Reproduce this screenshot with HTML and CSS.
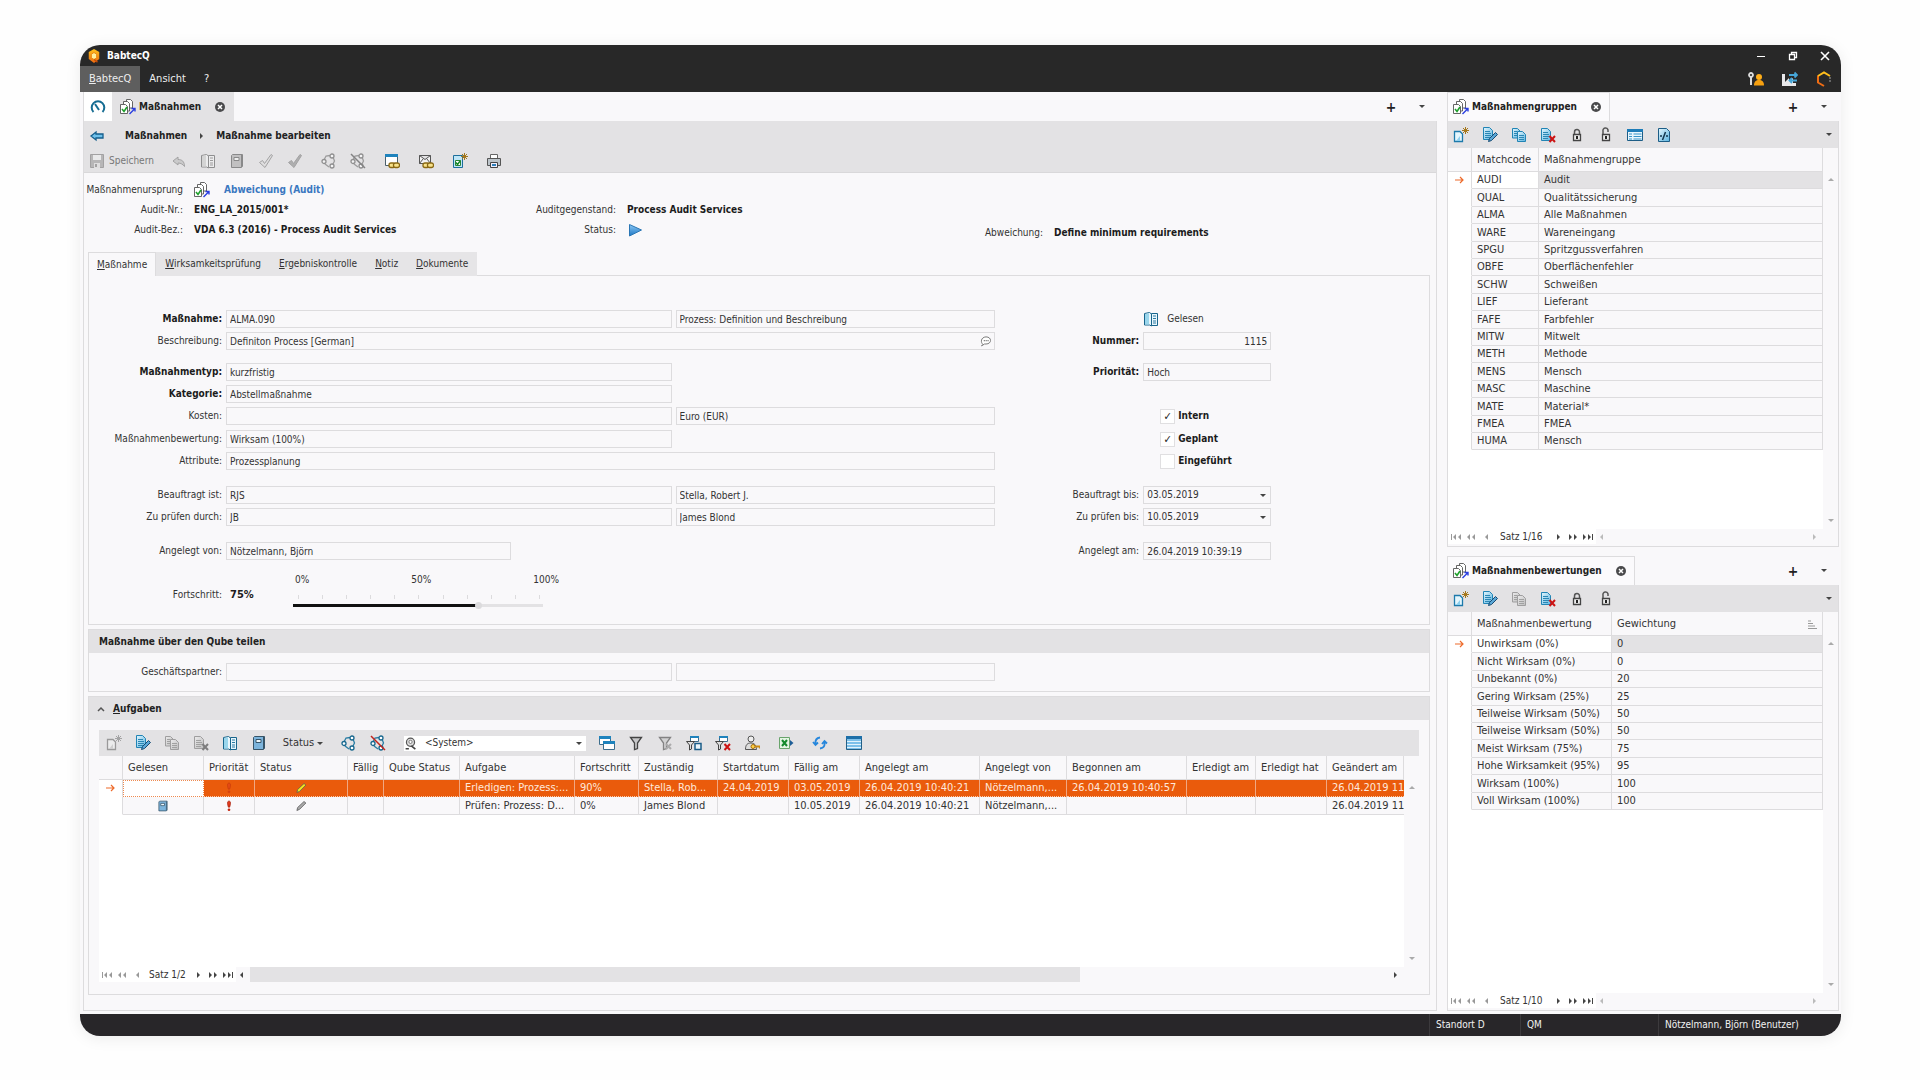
FILE: index.html
```html
<!DOCTYPE html>
<html lang="de">
<head>
    <meta charset="UTF-8">
    <meta name="viewport" content="width=device-width, initial-scale=1.0">
    <title>BabtecQ</title>
    <link rel="stylesheet" href="styles.css">
</head>
<body>

<!-- Icons -->
<svg class="sprite" aria-hidden="true">
    <defs>
        <linearGradient id="blue" x1="0" y1="0" x2="1" y2="1">
            <stop offset="0" stop-color="#e4f6fd"/>
            <stop offset="1" stop-color="#5bb4e0"/>
        </linearGradient>
        <linearGradient id="play" x1="0" y1="0" x2="0" y2="1">
            <stop offset="0" stop-color="#8cc8f4"/>
            <stop offset="1" stop-color="#1c76c4"/>
        </linearGradient>
        <linearGradient id="gold" x1="0" y1="0" x2="0" y2="1">
            <stop offset="0" stop-color="#ffc21c"/>
            <stop offset="1" stop-color="#ee6a10"/>
        </linearGradient>
    </defs>
    <symbol id="logo" viewBox="0 0 16 16">
        <path d="M8 0l6 3.500v8L8 16l-6-4.500v-8z" fill="url(#gold)"/>
        <path d="M8 4l3 2v4l-3 2-3-2V6z" fill="#fff0a0" stroke="#e8820c"/>
        <path d="M8 12l4 3" stroke="#c44a08" stroke-width="1.500"/>
    </symbol>
    <symbol id="measure" viewBox="0 0 16 16">
        <path d="M6.500 3V.5h4l2 2V9H9" fill="#fff" stroke="#555" stroke-width=".9"/>
        <path d="M3.500 5V2.500h4l2 2V12H8" fill="#fff" stroke="#555" stroke-width=".9"/>
        <path d="M.5 5.500h5l2 2v7h-7z" fill="#fff" stroke="#555" stroke-width=".9"/>
        <path d="M2 10l2 2.500L7 8" fill="none" stroke="#1fa02c" stroke-width="1.600"/>
        <path d="M9.500 15l5-5M11.500 9.500h3.500v3" fill="none" stroke="#2a3ee0" stroke-width="1.400"/>
    </symbol>
    <symbol id="gauge" viewBox="0 0 16 16">
        <path d="M3.500 13a6.300 6.300 0 1 1 9 0" fill="none" stroke="#156c92" stroke-width="2"/>
        <path d="M5 5l4 6" stroke="#156c92" stroke-width="2"/>
    </symbol>
    <symbol id="close" viewBox="0 0 12 12">
        <circle cx="6" cy="6" r="5" fill="#4a4a4c"/>
        <path d="M4 4l4 4M8 4L4 8" stroke="#fff" stroke-width="1.500"/>
    </symbol>
    <symbol id="back" viewBox="0 0 16 16">
        <path d="M2 8l5-4v2h7v4H7v2z" fill="#6fc0ea" stroke="#155e8c" stroke-width="1.300"/>
    </symbol>
    <symbol id="save" viewBox="0 0 16 16">
        <path d="M1.500 1.500h13v13h-13z" fill="#9a9a9c" stroke="#777"/>
        <path d="M4 2h8v5H4z" fill="#eee"/>
        <path d="M5 10h6v5H5z" fill="#ddd"/>
        <path d="M6 11h2v3H6z" fill="#777"/>
    </symbol>
    <symbol id="undo" viewBox="0 0 16 16">
        <path d="M2 8l5-4v2.500c4 0 6.500 2 6.500 7C12 11.500 10 10 7 10v2z" fill="#bbb" stroke="#777"/>
    </symbol>
    <symbol id="book" viewBox="0 0 16 16">
        <path d="M1.500 2.500l5-1 2 1.500v12l-2-1h-5z" fill="#e8f6fc" stroke="#18658c"/>
        <path d="M8.500 2.500h6v12h-6z" fill="#e8f6fc" stroke="#18658c"/>
        <path d="M10 5h3M10 7.500h3M10 10h3M10 12h3" stroke="#2c7ba3"/>
        <path d="M2 3l4-.5v11H2z" fill="#9ad6ec"/>
    </symbol>
    <symbol id="notebook" viewBox="0 0 16 16">
        <path d="M2.500 2.500l1-1h10v12l-1 1h-10z" fill="#7cb4dc" stroke="#375468"/>
        <path d="M12.500 2v12" stroke="#375468"/>
        <path d="M5 4.500h5v3H5z" fill="#eef8fd" stroke="#375468"/>
    </symbol>
    <symbol id="tick" viewBox="0 0 16 16">
        <path d="M1.500 9.500l3-2 2 3 6.500-9 1.500 1-7.500 12z" fill="#ddd" stroke="#777"/>
    </symbol>
    <symbol id="tick-solid" viewBox="0 0 16 16">
        <path d="M1.500 9.500l3-2 2 3 6.500-9 1.500 1-7.500 12z" fill="#8c8c8e" stroke="#777"/>
    </symbol>
    <symbol id="share" viewBox="0 0 16 16">
        <path d="M3 7l2-4 4-.5M12 4l1.500 4-2 4M8 14l-4-3" fill="none" stroke="#2a7ea4" stroke-width="1.300"/>
        <circle cx="11" cy="3" r="2" fill="#fff" stroke="#17678e" stroke-width="1.300"/>
        <circle cx="3" cy="8.500" r="2" fill="#fff" stroke="#17678e" stroke-width="1.300"/>
        <circle cx="11" cy="13" r="2" fill="#fff" stroke="#17678e" stroke-width="1.300"/>
    </symbol>
    <symbol id="unshare" viewBox="0 0 16 16">
        <use href="#share"/>
        <path d="M1 1l14 14" stroke="#c3241c" stroke-width="1.500"/>
    </symbol>
    <symbol id="chain" viewBox="0 0 16 16">
        <rect x="5" y="10" width="6" height="4.500" rx="2" fill="#f8e28a" stroke="#8a6914" stroke-width="1.300"/>
        <rect x="9.500" y="10" width="6" height="4.500" rx="2" fill="#f8e28a" stroke="#8a6914" stroke-width="1.300"/>
    </symbol>
    <symbol id="window-chain" viewBox="0 0 16 16">
        <path d="M1.500 1.500h12v11h-12z" fill="#fff" stroke="#4b5f6c"/>
        <path d="M1 1h13v3H1z" fill="#1f83bd"/>
        <use href="#chain"/>
    </symbol>
    <symbol id="mail-chain" viewBox="0 0 16 16">
        <path d="M1.500 2.500h11v8h-11zM1.500 2.500l5.500 4 5.500-4M1.500 10.500L5 6M12.500 10.500L9 6" fill="#f2f2f2" stroke="#555"/>
        <use href="#chain"/>
    </symbol>
    <symbol id="star" viewBox="0 0 16 16">
        <path d="M12.500 0v7M9 3.500h7M10 1l5 5M15 1l-5 5" stroke="#a5771b"/>
    </symbol>
    <symbol id="report-new" viewBox="0 0 16 16">
        <path d="M1.500 2.500h9v12h-9z" fill="#bfe6f7" stroke="#1d6f9c"/>
        <path d="M3.500 7.500h5v5h-5z" fill="#fff" stroke="#2a8436"/>
        <path d="M4 9.500l1.500 2 3-4" fill="none" stroke="#15892a" stroke-width="1.500"/>
        <use href="#star"/>
    </symbol>
    <symbol id="printer" viewBox="0 0 16 16">
        <path d="M4.500 1.500h7V6h-7z" fill="#fff" stroke="#666"/>
        <path d="M1.500 5.500h13v7h-13z" fill="#bcc4ca" stroke="#555"/>
        <path d="M4.500 9.500h7v5h-7z" fill="#eef" stroke="#444"/>
        <path d="M6 11h4v2H6z" fill="#2d7fb8"/>
    </symbol>
    <symbol id="new" viewBox="0 0 16 16">
        <path d="M1.500 4.500h5.500l2.500 2.500v7.500h-8z" fill="#e4f6fd" stroke="#1d7aab" stroke-width="1.300"/>
        <path d="M7 9v5H3z" fill="#8ccfee"/>
        <use href="#star"/>
    </symbol>
    <symbol id="sheet" viewBox="0 0 16 16">
        <path d="M2.500 1.500h6l3 3v9h-9z" fill="url(#blue)" stroke="#2184b5"/>
        <path d="M4 5.500h5M4 7.500h6M4 9.500h6M4 11.500h5" stroke="#2a86b4"/>
    </symbol>
    <symbol id="edit" viewBox="0 0 16 16">
        <use href="#sheet" x="-1" y="-1"/>
        <path d="M6.500 14.500l1-3 6-6 2 2-6 6z" fill="#5ba7d6" stroke="#174a72"/>
    </symbol>
    <symbol id="copy" viewBox="0 0 16 16">
        <path d="M1.500 1.500h5l2.500 2.500v7h-7.500z" fill="url(#blue)" stroke="#2184b5"/>
        <path d="M3 4.500h3M3 6.500h3M3 8.500h3" stroke="#2a86b4"/>
        <path d="M6.500 4.500h5l3 3v7h-8z" fill="url(#blue)" stroke="#2184b5"/>
        <path d="M8 8.500h5M8 10.500h5M8 12.500h5" stroke="#2a86b4"/>
    </symbol>
    <symbol id="delete" viewBox="0 0 16 16">
        <use href="#sheet" x="-1" y="0"/>
        <path d="M9.500 9l5.500 6M15 9l-5.500 6" stroke="#cc1414" stroke-width="2"/>
    </symbol>
    <symbol id="lock" viewBox="0 0 16 16">
        <path d="M5.500 7V5a2.500 2.500 0 0 1 5 0V7" fill="none" stroke="#555" stroke-width="1.500"/>
        <path d="M4.500 7.500h7v6h-7z" fill="#eee" stroke="#444" stroke-width="1.300"/>
        <path d="M8 9v3" stroke="#222" stroke-width="2"/>
    </symbol>
    <symbol id="unlock" viewBox="0 0 16 16">
        <path d="M5 7V4a2.500 2.500 0 0 1 5-1v2" fill="none" stroke="#555" stroke-width="1.500"/>
        <path d="M4.500 7.500h7v6h-7z" fill="#eee" stroke="#444" stroke-width="1.300"/>
        <path d="M8 9v3" stroke="#222" stroke-width="2"/>
    </symbol>
    <symbol id="list" viewBox="0 0 16 16">
        <path d="M.5 2.500h15v11H.5z" fill="#e8f6fd" stroke="#1d5d86"/>
        <path d="M0 2h16v3H0z" fill="#1d7cb8"/>
        <path d="M2 7h3M2 9.500h3M2 12h3M6.500 7h8M6.500 9.500h8M6.500 12h8" stroke="#3593c8"/>
    </symbol>
    <symbol id="script" viewBox="0 0 16 16">
        <path d="M2.500 1.500h8l3 3v10h-11z" fill="url(#blue)" stroke="#1d5d86"/>
        <path d="M4 9h2M10 9h2M9.500 5l-3 8" stroke="#12364e" stroke-width="1.500"/>
    </symbol>
    <symbol id="views" viewBox="0 0 16 16">
        <path d="M.5 1.500h11v8H.5z" fill="#fff" stroke="#3d6d8c"/>
        <path d="M0 1h12v3H0z" fill="#1f83bd"/>
        <path d="M4.500 6.500h11v8h-11z" fill="#fff" stroke="#3d6d8c"/>
        <path d="M4 6h12v3H4z" fill="#1f83bd"/>
    </symbol>
    <symbol id="filter" viewBox="0 0 16 16">
        <path d="M2.500 2.500h11L9.500 8v5.500l-3 1V8z" fill="#c8c8ca" stroke="#444" stroke-width="1.300"/>
    </symbol>
    <symbol id="filter-x" viewBox="0 0 16 16">
        <use href="#filter"/>
        <path d="M9 9l5 5M14 9l-5 5" stroke="#888" stroke-width="2"/>
    </symbol>
    <symbol id="filter-view" viewBox="0 0 16 16">
        <path d="M4.500 1.500h8v5h-8z" fill="#fff" stroke="#3d6d8c"/>
        <path d="M4 1h9v2H4z" fill="#1f83bd"/>
        <path d="M.5 6.500h8l-3 3.500v4l-2 1v-5z" fill="#ddd" stroke="#444"/>
    </symbol>
    <symbol id="filter-save" viewBox="0 0 16 16">
        <use href="#filter-view"/>
        <path d="M9 8.500h6v6H9z" fill="#eaf4fa" stroke="#1b5d88" stroke-width="1.500"/>
    </symbol>
    <symbol id="filter-delete" viewBox="0 0 16 16">
        <use href="#filter-view"/>
        <path d="M9.500 9l5.500 6M15 9l-5.500 6" stroke="#cc1414" stroke-width="2"/>
    </symbol>
    <symbol id="user-key" viewBox="0 0 16 16">
        <circle cx="7" cy="4" r="3" fill="#eee" stroke="#555"/>
        <path d="M1.500 14.500c0-5 2-6.500 5.500-6.500s5 2 5.500 6.500z" fill="#ddd" stroke="#555"/>
        <circle cx="9" cy="11.500" r="2" fill="#ffd34a" stroke="#a66d08"/>
        <path d="M11 11.500h5v2" fill="none" stroke="#c98a12" stroke-width="1.800"/>
    </symbol>
    <symbol id="excel" viewBox="0 0 16 16">
        <path d="M1.500 2.500h10v11h-10z" fill="#e4f5e4" stroke="#69a46c"/>
        <path d="M4 5l5 6M9 5l-5 6" stroke="#148a2c" stroke-width="2"/>
        <path d="M12 5l3.500 3-3.500 3z" fill="#1d5d96"/>
    </symbol>
    <symbol id="refresh" viewBox="0 0 16 16">
        <path d="M8 2.500C4 3 3 5 3.500 9M1 7l2.500 3L6 7.500M8 13.500c4-.5 5-2.500 4.500-6.500M10 9l2.500-3L15 8.500" fill="none" stroke="#2787dc" stroke-width="1.800"/>
    </symbol>
    <symbol id="table" viewBox="0 0 16 16">
        <path d="M.5 1.500h15v13H.5z" fill="#7cc0ea" stroke="#235f86"/>
        <path d="M0 1h16v3H0z" fill="#1d6fa8"/>
        <path d="M1 6.500h14M1 9.500h14M1 12.500h14" stroke="#e2f3fc"/>
    </symbol>
    <symbol id="search" viewBox="0 0 16 16">
        <circle cx="8" cy="6.500" r="5" fill="#ddd" stroke="#555" stroke-width="1.500"/>
        <circle cx="8" cy="6" r="2" fill="#fff" stroke="#666"/>
        <path d="M2 14.500h4M9 11l5 4" stroke="#444" stroke-width="2"/>
    </symbol>
    <symbol id="comment" viewBox="0 0 16 16">
        <path d="M4 12.500C.5 10 1 3 8 2.500c8 0 8 9.500 0 9.500H6l-4 2.500z" fill="#fff" stroke="#777" stroke-width="1.300"/>
        <path d="M5 7.500h7" stroke="#777" stroke-width="1.500" stroke-dasharray="1.500 1"/>
    </symbol>
    <symbol id="arrow" viewBox="0 0 12 12">
        <path d="M2 6h8M7 3l3 3-3 3" fill="none" stroke="#ee6a2a" stroke-width="1.200"/>
    </symbol>
    <symbol id="exclaim" viewBox="0 0 16 16">
        <path d="M8 1.500c2.500 0 2.500 3 .8 8H7.200C5.500 4.500 5.500 1.500 8 1.500z" fill="#e23a1c" stroke="#a41c08"/>
        <circle cx="8" cy="13" r="1.800" fill="#c42810"/>
    </symbol>
    <symbol id="pencil" viewBox="0 0 16 16">
        <path d="M2.500 14l1-4 8.500-8 2.500 2-8.500 8.500z" fill="currentColor" stroke="#555"/>
    </symbol>
    <symbol id="minimize" viewBox="0 0 12 12"><path d="M2 6.500h8" stroke="#fff"/></symbol>
    <symbol id="restore" viewBox="0 0 12 12">
        <path d="M2.500 4.500h5v5h-5zM4.500 4V2.500h5v5H8" fill="none" stroke="#fff" stroke-width="1.300"/>
    </symbol>
    <symbol id="exit" viewBox="0 0 12 12"><path d="M2 2l8 8M10 2l-8 8" stroke="#fff" stroke-width="1.600"/></symbol>
    <symbol id="key-user" viewBox="0 0 16 16">
        <circle cx="3" cy="4" r="2" fill="none" stroke="#ddd" stroke-width="1.800"/>
        <path d="M3 6v8" stroke="#ddd" stroke-width="2"/>
        <circle cx="11" cy="6" r="3" fill="#ffae18"/>
        <path d="M6 14.500c0-4 2-5.500 5-5.500s5 1.500 5 5.500z" fill="#f6a010"/>
    </symbol>
    <symbol id="sync" viewBox="0 0 16 16">
        <path d="M0 3h3v8l4-4v3l4-3v5h3v3H0z" fill="#e8e8ea"/>
        <path d="M7 4h8M12.500 1.500L15 4l-2.500 2.500M15 9.500H7.500M10 7L7.500 9.500 10 12" fill="none" stroke="#46a6d8" stroke-width="1.800"/>
    </symbol>
    <symbol id="qube" viewBox="0 0 16 16">
        <path d="M8 15l-6-3.500v-7" fill="none" stroke="#ee6c14" stroke-width="2"/>
        <path d="M2 5l6-3.500L14 5" fill="none" stroke="#ffbe1c" stroke-width="2"/>
        <path d="M14 6v6" stroke="#666" stroke-width="2" stroke-dasharray="2 1"/>
    </symbol>
    <symbol id="first" viewBox="0 0 12 8"><path d="M1.500 1v6" stroke="currentColor"/><path d="M6 1v6L3 4zM11 1v6L8 4z" fill="currentColor"/></symbol>
    <symbol id="prev-page" viewBox="0 0 12 8"><path d="M5 1v6L2 4zM10 1v6L7 4z" fill="currentColor"/></symbol>
    <symbol id="prev" viewBox="0 0 12 8"><path d="M8 1v6L5 4z" fill="currentColor"/></symbol>
    <symbol id="next" viewBox="0 0 12 8"><path d="M5 1v6l3-3z" fill="currentColor"/></symbol>
    <symbol id="next-page" viewBox="0 0 12 8"><path d="M2 1v6l3-3zM7 1v6l3-3z" fill="currentColor"/></symbol>
    <symbol id="last" viewBox="0 0 12 8"><path d="M1 1v6l3-3zM6 1v6l3-3z" fill="currentColor"/><path d="M10.500 1v6" stroke="currentColor"/></symbol>
</svg>

<div class="window">
    <header class="titlebar">
        <div class="title-row">
            <svg class="icon"><use href="#logo"/></svg>
            <span class="app-name">BabtecQ</span>
            <div class="window-buttons">
                <button aria-label="Minimieren"><svg class="icon-small"><use href="#minimize"/></svg></button>
                <button aria-label="Wiederherstellen"><svg class="icon-small"><use href="#restore"/></svg></button>
                <button aria-label="Schließen"><svg class="icon-small"><use href="#exit"/></svg></button>
            </div>
        </div>
        <nav class="menu-row">
            <button class="menu-item active"><u>B</u>abtecQ</button>
            <button class="menu-item">Ansicht</button>
            <button class="menu-item">?</button>
            <div class="window-buttons">
                <button aria-label="Anmeldung"><svg class="icon"><use href="#key-user"/></svg></button>
                <button aria-label="Synchronisieren"><svg class="icon"><use href="#sync"/></svg></button>
                <button aria-label="Qube"><svg class="icon"><use href="#qube"/></svg></button>
            </div>
        </nav>
    </header>

    <div class="workspace">
        <!-- Hauptbereich -->
        <main class="panel main-panel">
            <div class="tab-strip">
                <button class="home-tab" aria-label="Start"><svg class="icon"><use href="#gauge"/></svg></button>
                <div class="doc-tab grey">
                    <svg class="icon"><use href="#measure"/></svg>
                    <span>Maßnahmen</span>
                    <button aria-label="Tab schließen"><svg class="icon-small"><use href="#close"/></svg></button>
                </div>
                <button class="add" aria-label="Neuer Tab">+</button>
                <button class="strip-menu" aria-label="Tabs"><span class="caret"></span></button>
            </div>

            <div class="panel-body main-body">
                <div class="command-area">
                    <div class="breadcrumb">
                        <button aria-label="Zurück"><svg class="icon"><use href="#back"/></svg></button>
                        <a href="#">Maßnahmen</a>
                        <span class="caret right"></span>
                        <a href="#">Maßnahme bearbeiten</a>
                    </div>
                    <div class="toolbar main-toolbar">
                        <button class="save" disabled><svg class="icon"><use href="#save"/></svg>Speichern</button>
                        <button disabled aria-label="Rückgängig"><svg class="icon"><use href="#undo"/></svg></button>
                        <button disabled aria-label="Gelesen"><svg class="icon"><use href="#book"/></svg></button>
                        <button disabled aria-label="Ungelesen"><svg class="icon"><use href="#notebook"/></svg></button>
                        <button disabled aria-label="Prüfen"><svg class="icon"><use href="#tick"/></svg></button>
                        <button disabled aria-label="Freigeben"><svg class="icon"><use href="#tick-solid"/></svg></button>
                        <button class="group" disabled aria-label="Teilen"><svg class="icon"><use href="#share"/></svg></button>
                        <button disabled aria-label="Teilen beenden"><svg class="icon"><use href="#unshare"/></svg></button>
                        <button class="group" aria-label="Verknüpfung"><svg class="icon"><use href="#window-chain"/></svg></button>
                        <button class="group" aria-label="Link senden"><svg class="icon"><use href="#mail-chain"/></svg></button>
                        <button class="group" aria-label="Neuer Bericht"><svg class="icon"><use href="#report-new"/></svg></button>
                        <button class="group" aria-label="Drucken"><svg class="icon"><use href="#printer"/></svg></button>
                    </div>
                </div>

                <section class="origin">
                    <div class="origin-column">
                        <div class="origin-row">
                            <span class="name">Maßnahmenursprung</span>
                            <span class="value"><svg class="icon"><use href="#measure"/></svg><a class="origin-link" href="#">Abweichung (Audit)</a></span>
                        </div>
                        <div class="origin-row"><span class="name">Audit-Nr.:</span><span class="value">ENG_LA_2015/001*</span></div>
                        <div class="origin-row"><span class="name">Audit-Bez.:</span><span class="value">VDA 6.3 (2016) - Process Audit Services</span></div>
                    </div>
                    <div class="origin-column">
                        <div class="origin-row"><span class="name">Auditgegenstand:</span><span class="value">Process Audit Services</span></div>
                        <div class="origin-row">
                            <span class="name">Status:</span>
                            <span class="value"><svg class="icon" viewBox="0 0 16 16"><path d="M2.500 2.500L14.500 8l-12 6z" fill="url(#play)" stroke="#2a76b4"/></svg></span>
                        </div>
                    </div>
                    <div class="origin-column">
                        <div class="origin-row"><span class="name">Abweichung:</span><span class="value">Define minimum requirements</span></div>
                    </div>
                </section>

                <div class="form-tabs">
                    <button class="active"><u>M</u>aßnahme</button>
                    <button><u>W</u>irksamkeitsprüfung</button>
                    <button><u>E</u>rgebniskontrolle</button>
                    <button><u>N</u>otiz</button>
                    <button><u>D</u>okumente</button>
                </div>

                <form class="measure-form">
                    <div class="form-group">
                        <div class="form-row">
                            <label class="required" for="massnahme">Maßnahme:</label>
                            <input type="text" id="massnahme" value="ALMA.090" readonly>
                            <input type="text" aria-label="Maßnahme Text" value="Prozess: Definition und Beschreibung" readonly>
                            <span class="read-state"><svg class="icon"><use href="#book"/></svg>Gelesen</span>
                        </div>
                        <div class="form-row">
                            <label for="beschreibung">Beschreibung:</label>
                            <span class="wide with-icon">
                                <input type="text" id="beschreibung" value="Definiton Process [German]" readonly>
                                <svg class="icon-small"><use href="#comment"/></svg>
                            </span>
                            <label class="side required" for="nummer">Nummer:</label>
                            <input class="side-field number" type="text" id="nummer" value="1115" readonly>
                        </div>
                    </div>
                    <div class="form-group">
                        <div class="form-row">
                            <label class="required" for="typ">Maßnahmentyp:</label>
                            <input type="text" id="typ" value="kurzfristig" readonly>
                            <label class="side required" for="prio">Priorität:</label>
                            <input class="side-field" type="text" id="prio" value="Hoch" readonly>
                        </div>
                        <div class="form-row">
                            <label class="required" for="kategorie">Kategorie:</label>
                            <input type="text" id="kategorie" value="Abstellmaßnahme" readonly>
                        </div>
                        <div class="form-row">
                            <label for="kosten">Kosten:</label>
                            <input type="text" id="kosten" readonly>
                            <input type="text" aria-label="Währung" value="Euro (EUR)" readonly>
                            <label class="side-field check"><input type="checkbox" checked>Intern</label>
                        </div>
                    </div>
                    <div class="form-group tight">
                        <div class="form-row">
                            <label for="bewertung">Maßnahmenbewertung:</label>
                            <input type="text" id="bewertung" value="Wirksam (100%)" readonly>
                            <label class="side-field check"><input type="checkbox" checked>Geplant</label>
                        </div>
                        <div class="form-row">
                            <label for="attribute">Attribute:</label>
                            <input class="wide" type="text" id="attribute" value="Prozessplanung" readonly>
                            <label class="side-field check"><input type="checkbox">Eingeführt</label>
                        </div>
                    </div>
                    <div class="form-group spaced">
                        <div class="form-row">
                            <label for="beauftragt">Beauftragt ist:</label>
                            <input type="text" id="beauftragt" value="RJS" readonly>
                            <input type="text" aria-label="Beauftragt Name" value="Stella, Robert J." readonly>
                            <label class="side" for="beauftragtBis">Beauftragt bis:</label>
                            <span class="side-field select"><select id="beauftragtBis"><option>03.05.2019</option></select><span class="caret"></span></span>
                        </div>
                        <div class="form-row">
                            <label for="pruefer">Zu prüfen durch:</label>
                            <input type="text" id="pruefer" value="JB" readonly>
                            <input type="text" aria-label="Prüfer Name" value="James Blond" readonly>
                            <label class="side" for="pruefenBis">Zu prüfen bis:</label>
                            <span class="side-field select"><select id="pruefenBis"><option>10.05.2019</option></select><span class="caret"></span></span>
                        </div>
                    </div>
                    <div class="form-group spaced">
                        <div class="form-row">
                            <label for="angelegtVon">Angelegt von:</label>
                            <input class="short" type="text" id="angelegtVon" value="Nötzelmann, Björn" readonly>
                            <label class="side" for="angelegtAm">Angelegt am:</label>
                            <input class="side-field" type="text" id="angelegtAm" value="26.04.2019 10:39:19" readonly>
                        </div>
                    </div>
                    <div class="form-row progress-row">
                        <label for="fortschritt">Fortschritt:</label>
                        <div class="progress">
                            <output for="fortschritt">75%</output>
                            <div class="slider">
                                <div class="scale"><span>0%</span><span>50%</span><span>100%</span></div>
                                <div class="ticks"><i></i><i></i><i></i><i></i><i></i><i></i><i></i><i></i><i></i><i></i><i></i></div>
                                <input type="range" id="fortschritt" min="0" max="100" value="75">
                            </div>
                        </div>
                    </div>
                </form>

                <section class="box">
                    <h2>Maßnahme über den Qube teilen</h2>
                    <div class="form-row share-row">
                        <label for="partner">Geschäftspartner:</label>
                        <input type="text" id="partner" readonly>
                        <input type="text" aria-label="Geschäftspartner Name" readonly>
                    </div>
                </section>

                <section class="box tasks">
                    <h2><svg class="icon-small" viewBox="0 0 12 12"><path d="M3 8l3-3 3 3" fill="none" stroke="#555" stroke-width="1.500"/></svg><span><u>A</u>ufgaben</span></h2>
                    <div class="tasks-body">
                        <div class="toolbar">
                            <button disabled aria-label="Neu"><svg class="icon"><use href="#new"/></svg></button>
                            <button aria-label="Bearbeiten"><svg class="icon"><use href="#edit"/></svg></button>
                            <button disabled aria-label="Kopieren"><svg class="icon"><use href="#copy"/></svg></button>
                            <button disabled aria-label="Löschen"><svg class="icon"><use href="#delete"/></svg></button>
                            <button aria-label="Gelesen"><svg class="icon"><use href="#book"/></svg></button>
                            <button aria-label="Ungelesen"><svg class="icon"><use href="#notebook"/></svg></button>
                            <button class="status-button">Status<span class="caret"></span></button>
                            <button aria-label="Teilen"><svg class="icon"><use href="#share"/></svg></button>
                            <button aria-label="Teilen beenden"><svg class="icon"><use href="#unshare"/></svg></button>
                            <span class="layout-select">
                                <svg class="icon"><use href="#search"/></svg>
                                <select aria-label="Layout"><option>&lt;System&gt;</option></select>
                                <span class="caret"></span>
                            </span>
                            <button aria-label="Ansichten"><svg class="icon"><use href="#views"/></svg></button>
                            <button aria-label="Filter"><svg class="icon"><use href="#filter"/></svg></button>
                            <button disabled aria-label="Filter entfernen"><svg class="icon"><use href="#filter-x"/></svg></button>
                            <button aria-label="Filter speichern"><svg class="icon"><use href="#filter-save"/></svg></button>
                            <button aria-label="Filter löschen"><svg class="icon"><use href="#filter-delete"/></svg></button>
                            <button aria-label="Benutzer"><svg class="icon"><use href="#user-key"/></svg></button>
                            <button class="group" aria-label="Excel"><svg class="icon"><use href="#excel"/></svg></button>
                            <button class="group" aria-label="Aktualisieren"><svg class="icon"><use href="#refresh"/></svg></button>
                            <button class="group" aria-label="Tabelle"><svg class="icon"><use href="#table"/></svg></button>
                        </div>
                        <div class="grid">
                            <div class="grid-view">
                                <table class="task-table">
                                    <colgroup>
                                        <col class="c-mark"><col class="c-read"><col class="c-prio"><col class="c-status"><col class="c-due">
                                        <col class="c-qube"><col class="c-task"><col class="c-progress"><col class="c-person"><col class="c-date">
                                        <col class="c-date"><col class="c-time"><col class="c-by"><col class="c-time"><col class="c-done"><col class="c-doneby"><col>
                                    </colgroup>
                                    <thead>
                                    <tr>
                                        <th></th><th>Gelesen</th><th>Priorität</th><th>Status</th><th>Fällig</th><th>Qube Status</th><th>Aufgabe</th>
                                        <th>Fortschritt</th><th>Zuständig</th><th>Startdatum</th><th>Fällig am</th><th>Angelegt am</th>
                                        <th>Angelegt von</th><th>Begonnen am</th><th>Erledigt am</th><th>Erledigt hat</th><th>Geändert am</th>
                                    </tr>
                                    </thead>
                                    <tbody>
                                    <tr class="selected">
                                        <td class="mark"><svg class="icon-small"><use href="#arrow"/></svg></td>
                                        <td class="focus"></td>
                                        <td class="symbol faded"><svg class="icon-small"><use href="#exclaim"/></svg></td>
                                        <td class="symbol yellow"><svg class="icon-small"><use href="#pencil"/></svg></td>
                                        <td></td><td></td><td>Erledigen: Prozess:...</td><td>90%</td><td>Stella, Rob...</td>
                                        <td>24.04.2019</td><td>03.05.2019</td><td>26.04.2019 10:40:21</td><td>Nötzelmann,...</td>
                                        <td>26.04.2019 10:40:57</td><td></td><td></td><td class="cut">26.04.2019 11</td>
                                    </tr>
                                    <tr>
                                        <td class="mark"></td>
                                        <td class="symbol"><svg class="icon-small"><use href="#notebook"/></svg></td>
                                        <td class="symbol"><svg class="icon-small"><use href="#exclaim"/></svg></td>
                                        <td class="symbol grey"><svg class="icon-small"><use href="#pencil"/></svg></td>
                                        <td></td><td></td><td>Prüfen: Prozess: D...</td><td>0%</td><td>James Blond</td>
                                        <td></td><td>10.05.2019</td><td>26.04.2019 10:40:21</td><td>Nötzelmann,...</td>
                                        <td></td><td></td><td></td><td class="cut">26.04.2019 11</td>
                                    </tr>
                                    </tbody>
                                </table>
                            </div>
                            <div class="scroll-column"><span class="caret up"></span><span class="caret"></span></div>
                        </div>
                        <div class="pager tasks-pager">
                            <div class="pager-buttons">
                                <button disabled aria-label="Erster"><svg><use href="#first"/></svg></button>
                                <button disabled aria-label="Seite zurück"><svg><use href="#prev-page"/></svg></button>
                                <button disabled aria-label="Zurück"><svg><use href="#prev"/></svg></button>
                                <span>Satz 1/2</span>
                                <button aria-label="Weiter"><svg><use href="#next"/></svg></button>
                                <button aria-label="Seite vor"><svg><use href="#next-page"/></svg></button>
                                <button aria-label="Letzter"><svg><use href="#last"/></svg></button>
                            </div>
                            <div class="scroll-row"><span class="caret left"></span><div class="track"><div class="thumb"></div></div><span class="caret right"></span></div>
                        </div>
                    </div>
                </section>
            </div>
        </main>

        <!-- Rechte Seite -->
        <aside class="side-area">
            <section class="panel">
                <div class="tab-strip">
                    <div class="doc-tab">
                        <svg class="icon"><use href="#measure"/></svg>
                        <span>Maßnahmengruppen</span>
                        <button aria-label="Tab schließen"><svg class="icon-small"><use href="#close"/></svg></button>
                    </div>
                    <button class="add" aria-label="Neuer Tab">+</button>
                    <button class="strip-menu" aria-label="Tabs"><span class="caret"></span></button>
                </div>
                <div class="panel-body">
                    <div class="toolbar">
                        <button aria-label="Neu"><svg class="icon"><use href="#new"/></svg></button>
                        <button aria-label="Bearbeiten"><svg class="icon"><use href="#edit"/></svg></button>
                        <button aria-label="Kopieren"><svg class="icon"><use href="#copy"/></svg></button>
                        <button aria-label="Löschen"><svg class="icon"><use href="#delete"/></svg></button>
                        <button aria-label="Sperren"><svg class="icon"><use href="#lock"/></svg></button>
                        <button aria-label="Entsperren"><svg class="icon"><use href="#unlock"/></svg></button>
                        <button aria-label="Liste"><svg class="icon"><use href="#list"/></svg></button>
                        <button aria-label="Skript"><svg class="icon"><use href="#script"/></svg></button>
                        <button class="more" aria-label="Mehr"><span class="caret"></span></button>
                    </div>
                    <div class="grid">
                        <div class="grid-view">
                            <table class="group-table">
                                <colgroup><col class="c-mark"><col class="c-code"><col></colgroup>
                                <thead><tr><th></th><th>Matchcode</th><th>Maßnahmengruppe</th></tr></thead>
                                <tbody>
                                <tr class="current"><td class="mark"><svg class="icon-small"><use href="#arrow"/></svg></td><td>AUDI</td><td>Audit</td></tr>
                                <tr><td class="mark"></td><td>QUAL</td><td>Qualitätssicherung</td></tr>
                                <tr><td class="mark"></td><td>ALMA</td><td>Alle Maßnahmen</td></tr>
                                <tr><td class="mark"></td><td>WARE</td><td>Wareneingang</td></tr>
                                <tr><td class="mark"></td><td>SPGU</td><td>Spritzgussverfahren</td></tr>
                                <tr><td class="mark"></td><td>OBFE</td><td>Oberflächenfehler</td></tr>
                                <tr><td class="mark"></td><td>SCHW</td><td>Schweißen</td></tr>
                                <tr><td class="mark"></td><td>LIEF</td><td>Lieferant</td></tr>
                                <tr><td class="mark"></td><td>FAFE</td><td>Farbfehler</td></tr>
                                <tr><td class="mark"></td><td>MITW</td><td>Mitwelt</td></tr>
                                <tr><td class="mark"></td><td>METH</td><td>Methode</td></tr>
                                <tr><td class="mark"></td><td>MENS</td><td>Mensch</td></tr>
                                <tr><td class="mark"></td><td>MASC</td><td>Maschine</td></tr>
                                <tr><td class="mark"></td><td>MATE</td><td>Material*</td></tr>
                                <tr><td class="mark"></td><td>FMEA</td><td>FMEA</td></tr>
                                <tr><td class="mark"></td><td>HUMA</td><td>Mensch</td></tr>
                                </tbody>
                            </table>
                        </div>
                        <div class="scroll-column"><span class="caret up"></span><span class="caret"></span></div>
                    </div>
                    <div class="pager">
                        <div class="pager-buttons">
                            <button disabled aria-label="Erster"><svg><use href="#first"/></svg></button>
                            <button disabled aria-label="Seite zurück"><svg><use href="#prev-page"/></svg></button>
                            <button disabled aria-label="Zurück"><svg><use href="#prev"/></svg></button>
                            <span>Satz 1/16</span>
                            <button aria-label="Weiter"><svg><use href="#next"/></svg></button>
                            <button aria-label="Seite vor"><svg><use href="#next-page"/></svg></button>
                            <button aria-label="Letzter"><svg><use href="#last"/></svg></button>
                        </div>
                        <div class="scroll-row light"><span class="caret left"></span><span class="caret right"></span></div>
                    </div>
                </div>
            </section>

            <section class="panel">
                <div class="tab-strip">
                    <div class="doc-tab">
                        <svg class="icon"><use href="#measure"/></svg>
                        <span>Maßnahmenbewertungen</span>
                        <button aria-label="Tab schließen"><svg class="icon-small"><use href="#close"/></svg></button>
                    </div>
                    <button class="add" aria-label="Neuer Tab">+</button>
                    <button class="strip-menu" aria-label="Tabs"><span class="caret"></span></button>
                </div>
                <div class="panel-body">
                    <div class="toolbar">
                        <button aria-label="Neu"><svg class="icon"><use href="#new"/></svg></button>
                        <button aria-label="Bearbeiten"><svg class="icon"><use href="#edit"/></svg></button>
                        <button disabled aria-label="Kopieren"><svg class="icon"><use href="#copy"/></svg></button>
                        <button aria-label="Löschen"><svg class="icon"><use href="#delete"/></svg></button>
                        <button aria-label="Sperren"><svg class="icon"><use href="#lock"/></svg></button>
                        <button aria-label="Entsperren"><svg class="icon"><use href="#unlock"/></svg></button>
                        <button class="more" aria-label="Mehr"><span class="caret"></span></button>
                    </div>
                    <div class="grid">
                        <div class="grid-view">
                            <table class="group-table">
                                <colgroup><col class="c-mark"><col class="c-rating"><col></colgroup>
                                <thead>
                                <tr>
                                    <th></th><th>Maßnahmenbewertung</th>
                                    <th><div class="sorted">Gewichtung<svg class="icon-small" viewBox="0 0 12 12"><path d="M2 3h3M2 5.500h5M2 8h7M2 10.500h9" stroke="#999"/></svg></div></th>
                                </tr>
                                </thead>
                                <tbody>
                                <tr class="current"><td class="mark"><svg class="icon-small"><use href="#arrow"/></svg></td><td>Unwirksam (0%)</td><td>0</td></tr>
                                <tr><td class="mark"></td><td>Nicht Wirksam (0%)</td><td>0</td></tr>
                                <tr><td class="mark"></td><td>Unbekannt (0%)</td><td>20</td></tr>
                                <tr><td class="mark"></td><td>Gering Wirksam (25%)</td><td>25</td></tr>
                                <tr><td class="mark"></td><td>Teilweise Wirksam (50%)</td><td>50</td></tr>
                                <tr><td class="mark"></td><td>Teilweise Wirksam (50%)</td><td>50</td></tr>
                                <tr><td class="mark"></td><td>Meist Wirksam (75%)</td><td>75</td></tr>
                                <tr><td class="mark"></td><td>Hohe Wirksamkeit (95%)</td><td>95</td></tr>
                                <tr><td class="mark"></td><td>Wirksam (100%)</td><td>100</td></tr>
                                <tr><td class="mark"></td><td>Voll Wirksam (100%)</td><td>100</td></tr>
                                </tbody>
                            </table>
                        </div>
                        <div class="scroll-column"><span class="caret up"></span><span class="caret"></span></div>
                    </div>
                    <div class="pager">
                        <div class="pager-buttons">
                            <button disabled aria-label="Erster"><svg><use href="#first"/></svg></button>
                            <button disabled aria-label="Seite zurück"><svg><use href="#prev-page"/></svg></button>
                            <button disabled aria-label="Zurück"><svg><use href="#prev"/></svg></button>
                            <span>Satz 1/10</span>
                            <button aria-label="Weiter"><svg><use href="#next"/></svg></button>
                            <button aria-label="Seite vor"><svg><use href="#next-page"/></svg></button>
                            <button aria-label="Letzter"><svg><use href="#last"/></svg></button>
                        </div>
                        <div class="scroll-row light"><span class="caret left"></span><span class="caret right"></span></div>
                    </div>
                </div>
            </section>
        </aside>
    </div>

    <footer class="statusbar">
        <span class="site">Standort D</span>
        <span class="role">QM</span>
        <span class="user">Nötzelmann, Björn (Benutzer)</span>
    </footer>
</div>

</body>
</html>
```

FILE: styles.css
```css
* {
    box-sizing: border-box;
}

body {
    margin: 0;
    padding: 45px 79px 44px 80px;
    min-height: 100vh;
    display: flex;
    background-color: #fefefe;
    font-family: "DejaVu Sans Condensed", "DejaVu Sans", sans-serif;
    font-size: 10px;
    line-height: 14px;
    color: #333;
}

button, input, select {
    font: inherit;
    color: inherit;
    margin: 0;
}

button {
    border: none;
    background: none;
    padding: 0;
    display: flex;
    align-items: center;
    justify-content: center;
}

a {
    color: inherit;
    text-decoration: none;
}

.sprite {
    position: absolute;
    width: 0;
    height: 0;
}

.icon {
    width: 16px;
    height: 16px;
    flex: none;
}

.icon-small {
    width: 12px;
    height: 12px;
    flex: none;
}

.caret {
    width: 0;
    height: 0;
    flex: none;
    border: 3px solid transparent;
    border-top-color: #444;
    border-bottom: none;
}

.caret.up {
    border: 3px solid transparent;
    border-bottom-color: #aaa;
    border-top: none;
}

.caret.right {
    border: 3px solid transparent;
    border-left-color: #444;
    border-right: none;
}

.caret.left {
    border: 3px solid transparent;
    border-right-color: #444;
    border-left: none;
}

.window {
    flex: 1;
    min-width: 0;
    display: flex;
    flex-direction: column;
    background-color: #f9f8fa;
    border-radius: 20px;
    overflow: hidden;
    box-shadow: 0 2px 16px rgba(0, 0, 0, 0.08);
}

/* Titelleiste */
.titlebar {
    background-color: #282828;
    color: #eee;
}

.title-row {
    display: flex;
    align-items: center;
    height: 21px;
    padding-left: 7px;
}

.app-name {
    font-weight: bold;
    color: #fff;
    margin-left: 6px;
}

.title-row .icon {
    width: 14px;
    height: 14px;
}

.title-row .window-buttons button {
    width: 32px;
}

.menu-row {
    display: flex;
    height: 26px;
}

.menu-item {
    padding: 0 9px;
    font-size: 11px;
}

.menu-item.active {
    background-color: #5e5e5e;
}

.window-buttons {
    margin-left: auto;
    display: flex;
    align-items: center;
}

.window-buttons button {
    width: 34px;
}

.workspace {
    flex: 1;
    display: grid;
    grid-template-columns: minmax(0, 1fr) 392px;
    gap: 10px;
    padding: 0 2px 3px 3px;
}

.panel {
    display: flex;
    flex-direction: column;
    flex: 1;
    min-width: 0;
}

.side-area {
    display: flex;
    flex-direction: column;
    gap: 9px;
}

.panel-body {
    flex: 1;
    display: flex;
    flex-direction: column;
    border: 1px solid #dddcde;
    border-top: none;
}

/* Reiter */
.tab-strip {
    display: flex;
    align-items: stretch;
    height: 29px;
}

.home-tab {
    width: 29px;
    background-color: #fff;
    border-left: 1px solid #dddcde;
}

.doc-tab {
    display: flex;
    align-items: center;
    padding: 0 7px 0 5px;
    font-weight: bold;
    color: #222;
    background-color: #fbfafc;
    border: 1px solid #dddcde;
    border-bottom: none;
}

.doc-tab.grey {
    padding-left: 7px;
    background-color: #e3e2e4;
    border-color: #e3e2e4;
}

.doc-tab span {
    margin: 0 13px 0 3px;
}

.add {
    margin-left: auto;
    width: 30px;
    font-size: 14px;
    font-weight: bold;
    color: #222;
}

.strip-menu {
    width: 31px;
}

/* Werkzeugleisten */
.command-area {
    background-color: #e3e2e4;
    height: 52px;
    border-bottom: 1px solid #d9d8da;
    flex: none;
}

.breadcrumb {
    display: flex;
    align-items: center;
    height: 29px;
    padding-left: 5px;
    font-weight: bold;
    color: #222;
}

.breadcrumb a:first-of-type {
    margin-left: 20px;
}

.breadcrumb .caret {
    margin: 0 13px;
}

.toolbar {
    display: flex;
    align-items: center;
    height: 26px;
    flex: none;
    background-color: #e3e2e4;
}

.toolbar button {
    width: 29px;
    height: 22px;
}

.toolbar button:disabled {
    color: #777;
}

.toolbar button:disabled svg {
    filter: grayscale(1);
    opacity: 0.6;
}

.main-toolbar {
    height: 22px;
}

.toolbar .group {
    width: 34px;
    padding-left: 5px;
}

.toolbar .save {
    width: 80px;
    gap: 4px;
    padding-left: 5px;
    justify-content: flex-start;
}

.side-area .toolbar {
    height: 27px;
}

.side-area .toolbar button {
    padding-right: 3px;
}

.side-area .toolbar .more {
    width: 18px;
    padding: 0;
    margin-left: auto;
}

.toolbar .status-button {
    width: 56px;
    gap: 3px;
    margin: 0 3px 0 2px;
    font-size: 11px;
}

/* Ursprung der Maßnahme */
.origin {
    display: grid;
    grid-template-columns: 433fr 427fr 492fr;
    height: 79px;
    flex: none;
}

.origin-column {
    display: flex;
    flex-direction: column;
    justify-content: flex-end;
    gap: 4px;
    padding-bottom: 14px;
}

.origin-column:last-child {
    padding-bottom: 11px;
}

.origin-row {
    display: flex;
    align-items: center;
    gap: 11px;
    height: 16px;
}

.origin-row .name {
    width: 99px;
    text-align: right;
}

.origin-row .value {
    display: flex;
    align-items: center;
    gap: 14px;
    font-weight: bold;
    color: #1c1c1c;
}

.origin-link {
    color: #3a77c0;
}

.form-tabs {
    display: flex;
    height: 24px;
    padding-left: 4px;
    margin-bottom: -1px;
    flex: none;
    z-index: 1;
}

.form-tabs button {
    background-color: #e6e5e7;
    padding: 0 9px;
}

.form-tabs .active {
    background-color: #f9f8fa;
    border: 1px solid #dddcde;
    border-bottom: none;
    padding: 0 8px;
}

/* Formular */
.measure-form {
    margin: 0 6px 4px 4px;
    border: 1px solid #dddcde;
    padding: 34px 0 15px;
    display: flex;
    flex-direction: column;
    gap: 13px;
    flex: none;
}

.form-group {
    display: flex;
    flex-direction: column;
    gap: 4px;
}

.form-group.tight {
    margin-top: -8px;
}

.form-group.spaced {
    margin-top: 3px;
}

.form-row {
    display: grid;
    grid-template-columns: 133px minmax(0, 446fr) minmax(0, 320fr) 140px 128px minmax(0, 154fr);
    column-gap: 4px;
    align-items: center;
}

.form-row > label {
    text-align: right;
}

.form-row .required {
    font-weight: bold;
    color: #1c1c1c;
}

.form-row input[type="text"],
.form-row select {
    width: 100%;
    min-width: 0;
    height: 18px;
    padding: 0 3px;
    border: 1px solid #dddcde;
    border-radius: 0;
    background-color: #f9f8fa;
    appearance: none;
}

.form-row input.short {
    width: 285px;
}

.form-row input.number {
    text-align: right;
}

.form-row .wide {
    grid-column: 2 / 4;
}

.with-icon, .select {
    position: relative;
    display: flex;
}

.with-icon svg {
    position: absolute;
    right: 3px;
    top: 3px;
}

.select .caret {
    position: absolute;
    right: 5px;
    top: 8px;
}

.form-row .side {
    grid-column: 4;
}

.form-row .side-field {
    grid-column: 5;
}

.read-state {
    grid-column: 5;
    display: flex;
    align-items: center;
    gap: 8px;
    height: 18px;
}

.form-row .check {
    display: flex;
    align-items: center;
    gap: 3px;
    padding-left: 17px;
    font-weight: bold;
    color: #1c1c1c;
}

.check input {
    appearance: none;
    width: 15px;
    height: 15px;
    border: 1px solid #e0dfe1;
    background-color: #fff;
    display: grid;
    place-items: center;
}

.check input:checked::after {
    content: "✓";
    font-size: 11px;
    color: #222;
}

.progress-row > label {
    align-self: end;
    padding-bottom: 7px;
}

.progress {
    grid-column: 2 / 4;
    display: flex;
    align-items: flex-end;
    padding-left: 4px;
}

.progress output {
    width: 63px;
    padding-bottom: 7px;
    font-size: 11px;
    font-weight: bold;
    color: #1c1c1c;
}

.slider {
    width: 266px;
}

.scale {
    display: flex;
    justify-content: space-between;
    padding-left: 2px;
}

.ticks {
    display: flex;
    justify-content: space-between;
    width: 242px;
    margin: 8px 0 2px 5px;
}

.ticks i {
    width: 1px;
    height: 4px;
    background-color: #dcdbdd;
}

.slider input {
    display: block;
    appearance: none;
    width: 250px;
    height: 8px;
    background: linear-gradient(#111, #111) left center / 75% 3px no-repeat,
                linear-gradient(#e3e2e4, #e3e2e4) center / 100% 3px no-repeat;
}

.slider input::-webkit-slider-thumb {
    appearance: none;
    width: 7px;
    height: 7px;
    border-radius: 4px;
    background-color: #dcdbdd;
}

/* Abschnitte */
.box {
    margin: 0 6px 4px 4px;
    border: 1px solid #dddcde;
    flex: none;
}

.box h2 {
    display: flex;
    align-items: center;
    gap: 6px;
    height: 23px;
    margin: 0;
    padding-left: 10px;
    font-size: 10px;
    color: #222;
    background-color: #e3e2e4;
}

.share-row {
    padding: 10px 0;
}

.box.tasks {
    flex: 1;
    display: flex;
    flex-direction: column;
    margin-bottom: 15px;
}

.box.tasks h2 {
    padding-left: 6px;
}

.tasks-body {
    flex: 1;
    display: flex;
    flex-direction: column;
    padding: 10px 10px 12px;
}

.layout-select {
    position: relative;
    display: flex;
    align-items: center;
    width: 182px;
    height: 15px;
    margin: 0 6px 0 12px;
    padding-right: 4px;
    background-color: #fff;
}

.layout-select .icon {
    width: 13px;
    height: 13px;
}

.layout-select select {
    flex: 1;
    appearance: none;
    border: none;
    background: none;
    padding: 0 8px;
    height: 15px;
}

/* Tabellen */
.grid {
    flex: 1;
    display: flex;
    min-height: 0;
}

.grid-view {
    flex: 1;
    min-width: 0;
    background-color: #fff;
}

.scroll-column {
    width: 15px;
    display: flex;
    flex-direction: column;
    justify-content: space-between;
    align-items: center;
    padding: 30px 0 7px;
}

.scroll-column .caret:last-child {
    border-top-color: #aaa;
}

table {
    width: 100%;
    table-layout: fixed;
    border-collapse: separate;
    border-spacing: 0;
    font-size: 11px;
}

th, td {
    padding: 0 0 0 5px;
    text-align: left;
    font-weight: normal;
    white-space: nowrap;
    overflow: hidden;
    background-color: #f9f8fa;
    border-right: 1px solid #dddcde;
    border-bottom: 1px solid #dddcde;
    line-height: 14px;
}

th {
    height: 24px;
}

td {
    height: 17px;
}

tbody tr:nth-child(5n+2) td,
tbody tr:nth-child(5n+4) td {
    height: 18px;
}

td.mark {
    padding: 0 6px 0 0;
    background-color: #fff;
    border-bottom-color: #fff;
}

td svg {
    display: block;
    margin: 0 auto;
}

td.mark svg {
    margin: 0 0 0 auto;
}

td.symbol {
    padding: 0;
}

.current td:nth-child(2) {
    background-color: #fff;
}

.current td:nth-child(3) {
    background-color: #e3e2e4;
}

.selected td:not(.mark) {
    color: #ffe9dc;
    background-color: #ea5b0c;
    border-right-color: #f0a883;
    border-bottom: 1px dotted #fbc7a8;
}

.selected td.focus {
    background-color: #fff;
    border: 1px dotted #ee8a50;
}

td.faded svg {
    opacity: 0.5;
}

.selected td.yellow {
    color: #f4e81c;
}

td.grey {
    color: #aaa;
}

td.cut {
    border-right: none;
}

.sorted {
    display: flex;
    justify-content: space-between;
    align-items: center;
    padding-right: 4px;
}

.c-mark { width: 24px; }
.c-read { width: 81px; }
.c-prio { width: 51px; }
.c-status { width: 93px; }
.c-due { width: 36px; }
.c-qube { width: 76px; }
.c-task { width: 115px; }
.c-progress { width: 64px; }
.c-person { width: 79px; }
.c-date { width: 71px; }
.c-time { width: 120px; }
.c-by { width: 87px; }
.c-done { width: 69px; }
.c-doneby { width: 71px; }
.c-code { width: 67px; }
.c-rating { width: 140px; }

/* Navigation unter den Tabellen */
.pager {
    display: flex;
    height: 15px;
    flex: none;
}

.pager-buttons {
    display: flex;
    align-items: center;
    background-color: #fff;
}

.pager-buttons button {
    width: 15px;
    color: #444;
}

.pager-buttons button:disabled {
    color: #999;
}

.pager-buttons svg {
    width: 12px;
    height: 8px;
}

.pager-buttons span {
    margin: 0 5px;
    font-size: 10px;
}

.side-area .pager {
    margin-bottom: 2px;
}

.side-area .pager-buttons span {
    margin: 0 8px 0 7px;
}

.scroll-row {
    flex: 1;
    display: flex;
    align-items: center;
    gap: 7px;
    padding: 0 22px 0 4px;
}

.scroll-row .track {
    flex: 1;
    height: 15px;
}

.scroll-row .thumb {
    width: 73%;
    height: 15px;
    background-color: #e3e2e4;
}

.scroll-row.light {
    justify-content: space-between;
}

.scroll-row.light .caret.left {
    border-right-color: #bbb;
}

.scroll-row.light .caret.right {
    border-left-color: #bbb;
}

/* Statuszeile */
.statusbar {
    display: flex;
    justify-content: flex-end;
    height: 22px;
    flex: none;
    background-color: #282629;
    color: #f2f2f2;
}

.statusbar span {
    padding-left: 6px;
    border-left: 1px solid #3c3a3d;
    line-height: 22px;
}

.statusbar .site {
    width: 91px;
}

.statusbar .role {
    width: 138px;
}

.statusbar .user {
    width: 183px;
}
```
